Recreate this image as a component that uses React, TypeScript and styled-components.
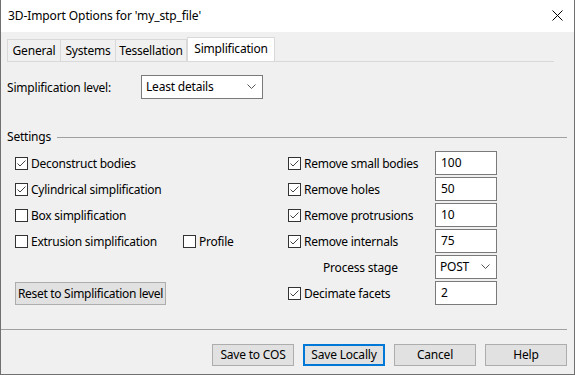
import styled, { createGlobalStyle } from 'styled-components';

const GlobalStyle = createGlobalStyle`
  html, body {
    margin: 0;
    padding: 0;
    background: #ffffff;
  }
  body {
    font-family: 'Noto Sans', 'Liberation Sans', sans-serif;
    font-size: 12px;
    color: #000;
  }
`;

const Window = styled.div`
  box-sizing: border-box;
  width: 575px;
  height: 375px;
  border: 1px solid #707070;
  border-top: none;
  display: flex;
  flex-direction: column;
  background: #f0f0f0;
  overflow: hidden;
`;

const TitleBar = styled.div`
  height: 31px;
  flex: 0 0 31px;
  background: #ffffff;
  display: flex;
  align-items: center;
  justify-content: space-between;
  padding: 0 11px 1px 7px;
`;

const Title = styled.span`
  font-size: 12px;
  letter-spacing: -0.1px;
`;

const Body = styled.div`
  flex: 1;
  padding: 5px 0 0 6px;
  display: flex;
  flex-direction: column;
`;

const TabStrip = styled.div`
  display: flex;
  align-items: flex-end;
  height: 24px;
`;

const Tab = styled.div<{ $active?: boolean; $w: number }>`
  box-sizing: border-box;
  width: ${(p) => p.$w}px;
  height: ${(p) => (p.$active ? 24 : 22)}px;
  border: 1px solid #d9d9d9;
  border-bottom: none;
  border-left-width: ${(p) => (p.$active ? 1 : 0)}px;
  background: ${(p) => (p.$active ? '#ffffff' : '#f0f0f0')};
  display: flex;
  align-items: center;
  justify-content: center;
  padding-bottom: ${(p) => (p.$active ? 3 : 0)}px;
  letter-spacing: -0.2px;
  white-space: nowrap;
  &:first-child {
    border-left-width: 1px;
  }
`;

const Panel = styled.div`
  width: 547px;
  border-top: 1px solid #d9d9d9;
  padding-top: 13px;
  display: flex;
  flex-direction: column;
`;

const LevelRow = styled.div`
  display: flex;
  align-items: center;
  height: 24px;
`;

const FieldLabel = styled.span<{ $w?: number }>`
  width: ${(p) => p.$w ?? 134}px;
  letter-spacing: -0.2px;
  white-space: nowrap;
`;

const Select = styled.div<{ $w: number }>`
  box-sizing: border-box;
  width: ${(p) => p.$w}px;
  height: 24px;
  border: 1px solid #7a7a7a;
  background: #ffffff;
  display: flex;
  align-items: center;
  justify-content: space-between;
  padding: 0 6px 1px 4px;
  letter-spacing: -0.2px;
`;

const Chevron = () => (
  <svg width="9" height="5" viewBox="0 0 9 5">
    <polyline points="0.5,0.5 4.5,4.5 8.5,0.5" fill="none" stroke="#555" strokeWidth="1" />
  </svg>
);

const GroupHeader = styled.div`
  display: flex;
  align-items: center;
  margin-top: 30px;
  width: 560px;
  gap: 6px;
  height: 14px;
`;

const GroupTitle = styled.span`
  letter-spacing: -0.2px;
`;

const GroupLine = styled.div`
  flex: 1;
  height: 1px;
  background: #a0a0a0;
  margin-top: 2px;
`;

const Grid = styled.div`
  display: grid;
  grid-template-columns: 168px 105px 147px 62px;
  grid-auto-rows: 24px;
  row-gap: 2px;
  margin: 8px 0 0 8px;
`;

const CheckRow = styled.label<{ $col: number; $row: number }>`
  grid-column: ${(p) => p.$col};
  grid-row: ${(p) => p.$row};
  display: flex;
  align-items: center;
  gap: 3px;
  letter-spacing: -0.25px;
  white-space: nowrap;
`;

const Box = styled.span`
  box-sizing: border-box;
  width: 13px;
  height: 13px;
  border: 1px solid #333333;
  background: #ffffff;
  display: inline-flex;
  align-items: center;
  justify-content: center;
  flex: 0 0 13px;
`;

const Cell = styled.div<{ $col: number; $row: number; $span?: number }>`
  grid-column: ${(p) => p.$col} / span ${(p) => p.$span ?? 1};
  grid-row: ${(p) => p.$row};
  display: flex;
  align-items: center;
`;

const NumInput = styled.div`
  box-sizing: border-box;
  width: 62px;
  height: 24px;
  border: 1px solid #7a7a7a;
  background: #ffffff;
  display: flex;
  align-items: center;
  padding: 0 0 1px 5px;
`;

const StageLabel = styled.span`
  padding-left: 35px;
  letter-spacing: -0.2px;
`;

const ResetButton = styled.div`
  box-sizing: border-box;
  width: 151px;
  height: 23px;
  margin-top: 1px;
  border: 1px solid #adadad;
  background: #e1e1e1;
  display: flex;
  align-items: center;
  justify-content: center;
  letter-spacing: -0.3px;
  white-space: nowrap;
`;

const Separator = styled.div`
  height: 1px;
  width: 566px;
  background: #a0a0a0;
  margin-top: auto;
`;

const ButtonBar = styled.div`
  display: flex;
  justify-content: flex-end;
  gap: 9px;
  padding: 14px 7px 8px 0;
`;

const DialogButton = styled.div<{ $default?: boolean }>`
  box-sizing: border-box;
  width: 82px;
  height: 22px;
  border: ${(p) => (p.$default ? '2px solid #0078d7' : '1px solid #adadad')};
  background: #e1e1e1;
  display: flex;
  align-items: center;
  justify-content: center;
  letter-spacing: -0.2px;
  padding-bottom: 1px;
`;

const Check = ({ checked }: { checked: boolean }) => (
  <Box>
    {checked && (
      <svg width="11" height="11" viewBox="0 0 11 11">
        <polyline points="1.5,5.5 4,8 9.5,2.5" fill="none" stroke="#444" strokeWidth="1" />
      </svg>
    )}
  </Box>
);

const CloseIcon = () => (
  <svg width="11" height="11" viewBox="0 0 11 11">
    <path d="M0.5 0.5 L10.5 10.5 M10.5 0.5 L0.5 10.5" stroke="#000" strokeWidth="1" />
  </svg>
);

const leftChecks = [
  { label: 'Deconstruct bodies', checked: true },
  { label: 'Cylindrical simplification', checked: true },
  { label: 'Box simplification', checked: false },
  { label: 'Extrusion simplification', checked: false },
];

const rightChecks = [
  { label: 'Remove small bodies', value: '100', row: 1 },
  { label: 'Remove holes', value: '50', row: 2 },
  { label: 'Remove protrusions', value: '10', row: 3 },
  { label: 'Remove internals', value: '75', row: 4 },
  { label: 'Decimate facets', value: '2', row: 6 },
];

const tabs = [
  { name: 'General', w: 54 },
  { name: 'Systems', w: 55 },
  { name: 'Tessellation', w: 71 },
  { name: 'Simplification', w: 88, active: true },
];

export default function App() {
  return (
    <>
      <GlobalStyle />
      <Window>
        <TitleBar>
          <Title>3D-Import Options for 'my_stp_file'</Title>
          <CloseIcon />
        </TitleBar>
        <Body>
          <TabStrip>
            {tabs.map((t) => (
              <Tab key={t.name} $w={t.w} $active={t.active}>
                {t.name}
              </Tab>
            ))}
          </TabStrip>
          <Panel>
            <LevelRow>
              <FieldLabel>Simplification level:</FieldLabel>
              <Select $w={122}>
                Least details
                <Chevron />
              </Select>
            </LevelRow>
            <GroupHeader>
              <GroupTitle>Settings</GroupTitle>
              <GroupLine />
            </GroupHeader>
            <Grid>
              {leftChecks.map((c, i) => (
                <CheckRow key={c.label} $col={1} $row={i + 1}>
                  <Check checked={c.checked} />
                  {c.label}
                </CheckRow>
              ))}
              <CheckRow $col={2} $row={4}>
                <Check checked={false} />
                Profile
              </CheckRow>
              <Cell $col={1} $row={6} $span={2}>
                <ResetButton>Reset to Simplification level</ResetButton>
              </Cell>
              {rightChecks.map((c) => (
                <CheckRow key={c.label} $col={3} $row={c.row}>
                  <Check checked />
                  {c.label}
                </CheckRow>
              ))}
              {rightChecks.map((c) => (
                <Cell key={c.value + c.row} $col={4} $row={c.row}>
                  <NumInput>{c.value}</NumInput>
                </Cell>
              ))}
              <Cell $col={3} $row={5}>
                <StageLabel>Process stage</StageLabel>
              </Cell>
              <Cell $col={4} $row={5}>
                <Select $w={62}>
                  POST
                  <Chevron />
                </Select>
              </Cell>
            </Grid>
          </Panel>
        </Body>
        <Separator />
        <ButtonBar>
          <DialogButton>Save to COS</DialogButton>
          <DialogButton $default>Save Locally</DialogButton>
          <DialogButton>Cancel</DialogButton>
          <DialogButton>Help</DialogButton>
        </ButtonBar>
      </Window>
    </>
  );
}
